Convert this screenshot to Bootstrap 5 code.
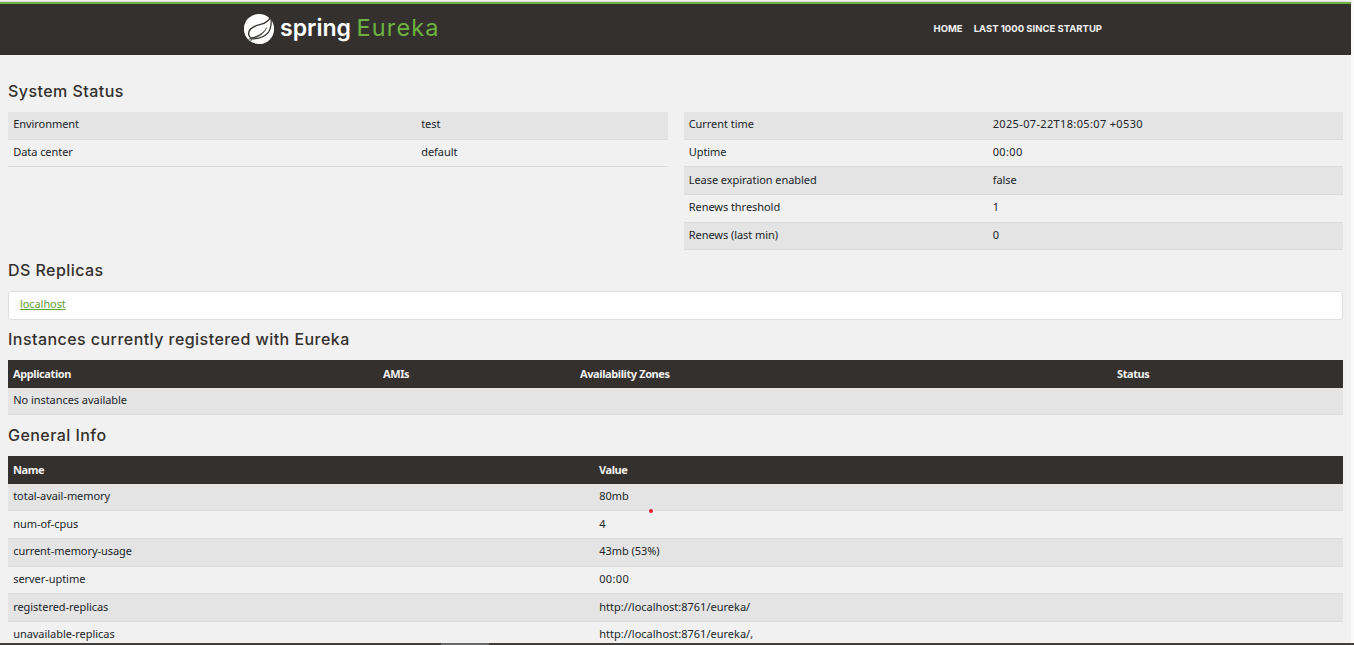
<!DOCTYPE html>
<html lang="en">
<head>
<meta charset="utf-8">
<meta name="viewport" content="width=device-width, initial-scale=1">
<title>Eureka</title>
<link href="https://cdn.jsdelivr.net/npm/bootstrap@5.3.0/dist/css/bootstrap.min.css" rel="stylesheet">
<style>
html,body{height:100%;overflow:hidden}
body{background:#fafafa;font-family:"Noto Sans","Open Sans",sans-serif;font-size:11px;line-height:17px;color:#212529}
.page-frame{width:1351px;height:645px;background:#f1f1f1;overflow:hidden}
.window-edge{height:2px;background:#f3f2f5;border-bottom:1px solid #dcdae0}
.top-bar{height:53px;background:#34302d;border-top:2px solid #6db33f;padding:0 244px}
.brand-mark{width:200px;height:40px;margin-top:-2px}
.top-links{gap:11px;padding-right:5px;margin-top:-1px}
.top-links a{font:700 9.5px/20px Inter,sans-serif;color:#f1f1f1;text-decoration:none;text-transform:uppercase}
.main-area{padding:0 8px}
.main-area h1{font:500 16px/19px Inter,sans-serif;letter-spacing:.45px;color:#34302d;margin:0;padding:11px 0}
.main-area .first-heading{padding-top:27px}
.main-area .table-heading{padding-top:10px}
.data-table{--bs-table-striped-bg:#e4e4e4;--bs-table-bg:transparent;margin:0;table-layout:fixed;border-collapse:separate;border-spacing:0}
.data-table td{height:27.67px;padding:3.4px 5.2px 5.6px;border-color:#dadce1;color:#212529;line-height:17px;letter-spacing:-.05px}
.data-table .figure-value{letter-spacing:.35px}
.data-table .url-value{letter-spacing:0}
.data-table th{height:27.4px;padding:4px 5px 6px;background:#34302d!important;color:#f1f1f1!important;border:0;line-height:17px;letter-spacing:-.4px}
.replica-box{height:29px;background:#fff;border:1px solid #dcdee1;border-radius:3px;padding:3px 11px;letter-spacing:-.08px}
.replica-box a{color:#5fa134;text-underline-offset:1px}
.marker{left:649px;top:509px;width:4px;height:4px;background:#e3222b}
.bottom-edge{left:0;top:643px;height:2px;width:1354px;background:#403d3d}
.bottom-thumb{left:441px;width:48px;height:2px;background:#696869}
</style>
</head>
<body>
<div class="page-frame">
  <div class="window-edge"></div>
  <nav class="top-bar d-flex justify-content-between align-items-center">
    <svg class="brand-mark" viewBox="0 0 200 40" aria-label="spring Eureka">
      <circle cx="15" cy="20" r="15.1" fill="#fff"/>
      <path d="M22 5L26.3 9.5L27.2 6.2L30 9V3H22Z" fill="#34302d"/>
      <path d="M26.8 7.5C24.5 12.8 21.5 14.3 16.5 15.4C9.5 17 4.6 19.5 4.6 24.8C4.6 26.6 5.4 27.9 6.7 28.8" fill="none" stroke="#34302d" stroke-width="1.4"/>
      <path d="M5.8 30C15 30.2 21 28.2 24.5 23.2C27.5 18.5 27.6 13.5 26.9 7.5" fill="none" stroke="#34302d" stroke-width="1.2"/>
      <path d="M6.7 28.8C14 27.5 20 24 22.6 18.6C20 25 14.5 28.6 7 29.8Z" fill="#34302d" stroke="#34302d" stroke-width=".5"/>
      <circle cx="6" cy="31" r="1.3" fill="#fff" stroke="#34302d" stroke-width=".7"/>
      <text x="36" y="27" font-family="Inter,sans-serif" font-size="24" font-weight="600" fill="#fff" textLength="71" lengthAdjust="spacingAndGlyphs">spring</text>
      <text x="112.5" y="27" font-family="Inter,sans-serif" font-size="23.5" font-weight="400" fill="#6db33f" textLength="82">Eureka</text>
    </svg>
    <div class="top-links d-flex"><a href="#">Home</a><a href="#">Last 1000 since startup</a></div>
  </nav>
  <main class="main-area">
    <h1 class="first-heading">System Status</h1>
    <div class="row gx-3">
      <div class="col-6">
        <table class="table table-striped data-table"><colgroup><col style="width:408px"><col></colgroup>
          <tbody><tr><td>Environment</td><td>test</td></tr><tr><td>Data center</td><td>default</td></tr></tbody></table>
      </div>
      <div class="col-6">
        <table class="table table-striped data-table"><colgroup><col style="width:304px"><col></colgroup>
          <tbody><tr><td>Current time</td><td class="figure-value">2025-07-22T18:05:07 +0530</td></tr><tr><td>Uptime</td><td class="figure-value">00:00</td></tr><tr><td>Lease expiration enabled</td><td>false</td></tr><tr><td>Renews threshold</td><td>1</td></tr><tr><td>Renews (last min)</td><td>0</td></tr></tbody></table>
      </div>
    </div>
    <h1>DS Replicas</h1>
    <div class="replica-box"><a href="#">localhost</a></div>
    <h1 class="table-heading">Instances currently registered with Eureka</h1>
    <table class="table table-striped data-table"><colgroup><col style="width:370px"><col style="width:197px"><col style="width:537px"><col></colgroup>
      <thead><tr><th>Application</th><th>AMIs</th><th>Availability Zones</th><th>Status</th></tr></thead>
      <tbody><tr><td colspan="4">No instances available</td></tr></tbody></table>
    <h1>General Info</h1>
    <table class="table table-striped data-table"><colgroup><col style="width:586px"><col></colgroup>
      <thead><tr><th>Name</th><th>Value</th></tr></thead>
      <tbody><tr><td>total-avail-memory</td><td>80mb</td></tr><tr><td>num-of-cpus</td><td>4</td></tr><tr><td>current-memory-usage</td><td>43mb (53%)</td></tr><tr><td>server-uptime</td><td class="figure-value">00:00</td></tr><tr><td>registered-replicas</td><td class="url-value">http://localhost:8761/eureka/</td></tr><tr><td>unavailable-replicas</td><td class="url-value">http://localhost:8761/eureka/,</td></tr></tbody></table>
  </main>
</div>
<span class="marker position-absolute rounded-circle"></span>
<div class="bottom-edge position-absolute"><div class="bottom-thumb position-absolute"></div></div>
<script src="https://cdn.jsdelivr.net/npm/bootstrap@5.3.0/dist/js/bootstrap.bundle.min.js"></script>
</body>
</html>
